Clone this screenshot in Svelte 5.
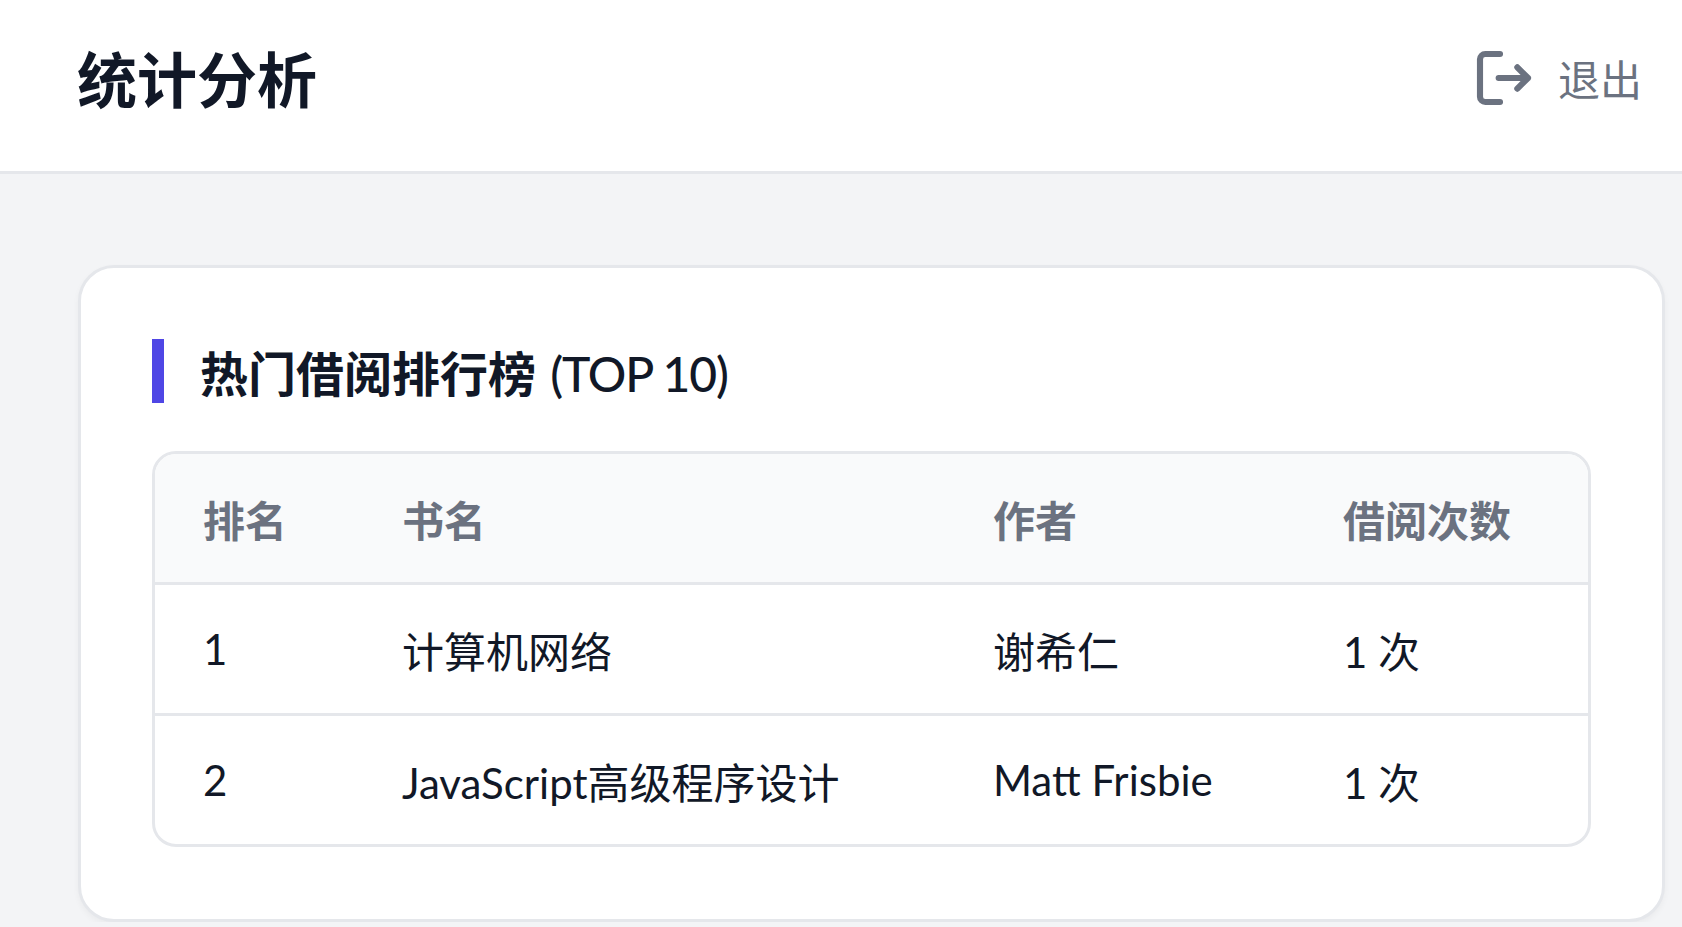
<script lang="ts">
	type Row = { rank: number; title: string; author: string; count: string };

	const rows: Row[] = [
		{ rank: 1, title: '计算机网络', author: '谢希仁', count: '1 次' },
		{ rank: 2, title: 'JavaScript高级程序设计', author: 'Matt Frisbie', count: '1 次' }
	];
</script>

<header class="topbar">
	<h1>统计分析</h1>
	<button class="logout">
		<svg width="64" height="64" viewBox="0 0 24 24" fill="none" stroke="currentColor" stroke-width="2.3" stroke-linecap="round" stroke-linejoin="round">
			<path d="M10.5 21H5a2 2 0 0 1-2-2V5a2 2 0 0 1 2-2h5.5M17 16l4-4-4-4M21 12H10"/>
		</svg>
		<span>退出</span>
	</button>
</header>

<main class="content">
	<section class="card">
		<h2><b>热门借阅排行榜</b> <span>(TOP 10)</span></h2>
		<div class="table-wrap">
			<table>
				<thead>
					<tr>
						<th class="c-rank">排名</th>
						<th class="c-title">书名</th>
						<th class="c-author">作者</th>
						<th>借阅次数</th>
					</tr>
				</thead>
				<tbody>
					{#each rows as row}
						<tr>
							<td>{row.rank}</td>
							<td>{row.title}</td>
							<td>{row.author}</td>
							<td>{row.count}</td>
						</tr>
					{/each}
				</tbody>
			</table>
		</div>
	</section>
</main>

<style>
	:global(body) {
		background: #f3f4f6;
		font-family: Lato, "Noto Sans CJK SC", sans-serif;
		color: #111827;
		overflow: hidden;
	}

	.topbar {
		display: flex;
		align-items: center;
		justify-content: space-between;
		box-sizing: content-box;
		height: 155px;
		padding: 0 40px 16px 77px;
		background: #fff;
		border-bottom: 3px solid #e5e7eb;
	}

	h1 {
		margin: 4px 0 0;
		font-size: 60px;
		font-weight: 700;
		line-height: 84px;
	}

	.logout {
		display: flex;
		align-items: center;
		gap: 22px;
		padding: 0;
		border: none;
		background: none;
		color: #6b7280;
		font: inherit;
		font-size: 42px;
	}

	.content {
		padding: 91px 17px 0 78px;
	}

	.card {
		padding: 71px 71px 72px;
		background: #fff;
		border: 3px solid #e5e7eb;
		border-radius: 36px;
		box-shadow: 0 3px 6px rgba(0, 0, 0, 0.04);
	}

	h2 {
		margin: 0 0 48px;
		padding: 6px 0 0 36px;
		border-left: 12px solid #4f46e5;
		font-size: 48px;
		font-weight: 400;
		line-height: 58px;
	}

	h2 b {
		font-weight: 700;
	}

	h2 span {
		margin-left: 2px;
		font-weight: 500;
		letter-spacing: -1.2px;
	}

	.table-wrap {
		border: 3px solid #e5e7eb;
		border-radius: 24px;
		overflow: hidden;
	}

	table {
		width: 100%;
		border-collapse: collapse;
		font-size: 42px;
	}

	th {
		height: 128px;
		padding: 0 48px;
		background: #f9fafb;
		color: #6b7280;
		font-weight: 700;
		text-align: left;
	}

	td {
		height: 128px;
		padding: 0 48px;
		border-top: 3px solid #e5e7eb;
	}

	.c-rank { width: 103px; }
	.c-title { width: 495px; }
	.c-author { width: 254px; }
</style>
